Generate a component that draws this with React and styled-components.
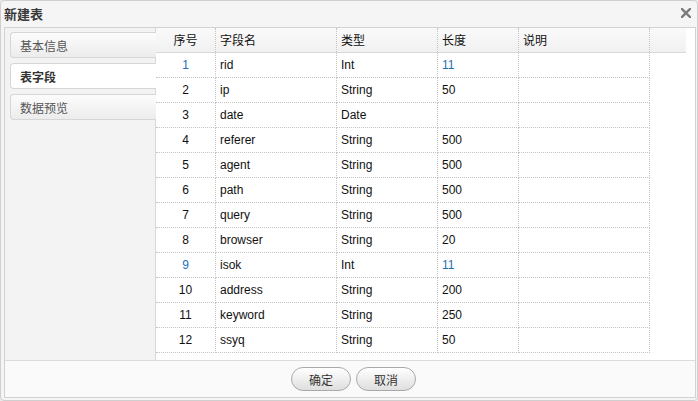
import React from "react";
import styled, { createGlobalStyle } from "styled-components";

const GlobalStyle = createGlobalStyle`
  html, body { margin: 0; padding: 0; background: #ececec; }
  body { font-family: "Liberation Sans", "Noto Sans CJK SC", sans-serif; font-size: 12px; }
  * { box-sizing: border-box; }
`;

const Dialog = styled.div`
  width: 698px;
  height: 401px;
  display: flex;
  flex-direction: column;
  background: #f5f5f5;
  border: 1px solid #cfcfcf;
  border-radius: 4px;
  padding: 0 1px 2px 3px;
`;

const TitleBar = styled.div`
  height: 26px;
  flex: none;
  display: flex;
  align-items: center;
  justify-content: space-between;
  padding: 0 4px 2px 0;
`;

const Title = styled.div`
  font-family: "Noto Sans CJK SC", sans-serif;
  font-size: 13px;
  font-weight: bold;
  color: #3a3a3a;
  letter-spacing: 0px;
`;

const CloseBtn = styled.button`
  width: 12px;
  height: 12px;
  padding: 0;
  border: 0;
  background: transparent;
  display: flex;
  align-items: center;
  justify-content: center;
  cursor: pointer;
`;

const Panel = styled.div`
  flex: 1;
  display: flex;
  flex-direction: column;
  border: 1px solid #d2d2d2;
  background: #fff;
`;

const Main = styled.div`
  height: 333px;
  display: flex;
  border-bottom: 1px solid #dcdcdc;
`;

const Sidebar = styled.div`
  width: 151px;
  flex: none;
  background: #f3f3f3;
  border-right: 1px solid #d8d8d8;
  padding: 4px 0 0 5px;
  display: flex;
  flex-direction: column;
  gap: 5px;
`;

const Tab = styled.div`
  height: 26px;
  display: flex;
  align-items: center;
  padding-left: 9px;
  margin-right: -1px;
  border: 1px solid #d6d6d6;
  border-right: none;
  border-radius: 4px 0 0 4px;
  background: ${(p) => (p.$active ? "#ffffff" : "linear-gradient(#fcfcfc, #ececec)")};
  font-family: "Noto Sans CJK SC", sans-serif;
  font-size: 12px;
  font-weight: ${(p) => (p.$active ? "bold" : "normal")};
  color: ${(p) => (p.$active ? "#333" : "#555")};
`;

const Grid = styled.div`
  flex: 1;
  background: #fff;
  display: flex;
  flex-direction: column;
`;

const cols = "60px 121px 101px 81px 131px";

const HeaderRow = styled.div`
  width: 530px;
  height: 25px;
  display: grid;
  grid-template-columns: ${cols} 1fr;
  background: linear-gradient(#fafafa, #f1f1f1);
  border-bottom: 1px solid #d9d9d9;
`;

const HeadCell = styled.div`
  height: 24px;
  line-height: 24px;
  padding-left: ${(p) => (p.$center ? "0" : "4px")};
  text-align: ${(p) => (p.$center ? "center" : "left")};
  border-right: ${(p) => (p.$filler ? "none" : "1px dotted #c4c4c4")};
  font-family: "Noto Sans CJK SC", sans-serif;
  font-size: 12px;
  color: #111;
  white-space: nowrap;
`;

const Row = styled.div`
  width: 494px;
  height: 25px;
  display: grid;
  grid-template-columns: ${cols};
`;

const Cell = styled.div`
  height: 25px;
  line-height: 24px;
  padding-left: ${(p) => (p.$center ? "0" : "4px")};
  text-align: ${(p) => (p.$center ? "center" : "left")};
  border-right: 1px dotted #c4c4c4;
  border-bottom: 1px dotted #c4c4c4;
  font-family: "Liberation Sans", "Noto Sans CJK SC", sans-serif;
  font-size: 12px;
  color: ${(p) => (p.$blue ? "#1a72b8" : "#111")};
  white-space: nowrap;
`;

const Footer = styled.div`
  flex: 1;
  background: #fafafa;
  display: flex;
  align-items: center;
  justify-content: center;
  gap: 5px;
  padding-left: 7px;
`;

const Button = styled.button`
  width: 60px;
  height: 24px;
  border: 1px solid #a9a9a9;
  border-radius: 12px;
  background: linear-gradient(#ffffff, #dedede);
  font-family: "Noto Sans CJK SC", sans-serif;
  font-size: 12px;
  color: #333;
  padding: 0;
  cursor: pointer;
`;

const rows = [
  ["1", "rid", "Int", "11", true],
  ["2", "ip", "String", "50"],
  ["3", "date", "Date", ""],
  ["4", "referer", "String", "500"],
  ["5", "agent", "String", "500"],
  ["6", "path", "String", "500"],
  ["7", "query", "String", "500"],
  ["8", "browser", "String", "20"],
  ["9", "isok", "Int", "11", true],
  ["10", "address", "String", "200"],
  ["11", "keyword", "String", "250"],
  ["12", "ssyq", "String", "50"],
];

export default function App() {
  return (
    <>
      <GlobalStyle />
      <Dialog>
        <TitleBar>
          <Title>新建表</Title>
          <CloseBtn aria-label="close">
            <svg width="10" height="10" viewBox="0 0 10 10">
              <path d="M1 1 L9 9 M9 1 L1 9" stroke="#7a7a7a" strokeWidth="2.4" strokeLinecap="square" />
            </svg>
          </CloseBtn>
        </TitleBar>
        <Panel>
          <Main>
            <Sidebar>
              <Tab>基本信息</Tab>
              <Tab $active>表字段</Tab>
              <Tab>数据预览</Tab>
            </Sidebar>
            <Grid>
              <HeaderRow>
                <HeadCell $center>序号</HeadCell>
                <HeadCell>字段名</HeadCell>
                <HeadCell>类型</HeadCell>
                <HeadCell>长度</HeadCell>
                <HeadCell>说明</HeadCell>
                <HeadCell $filler />
              </HeaderRow>
              {rows.map(([n, name, type, len, blue]) => (
                <Row key={n}>
                  <Cell $center $blue={blue}>{n}</Cell>
                  <Cell>{name}</Cell>
                  <Cell>{type}</Cell>
                  <Cell $blue={blue}>{len}</Cell>
                  <Cell />
                </Row>
              ))}
            </Grid>
          </Main>
          <Footer>
            <Button>确定</Button>
            <Button>取消</Button>
          </Footer>
        </Panel>
      </Dialog>
    </>
  );
}
